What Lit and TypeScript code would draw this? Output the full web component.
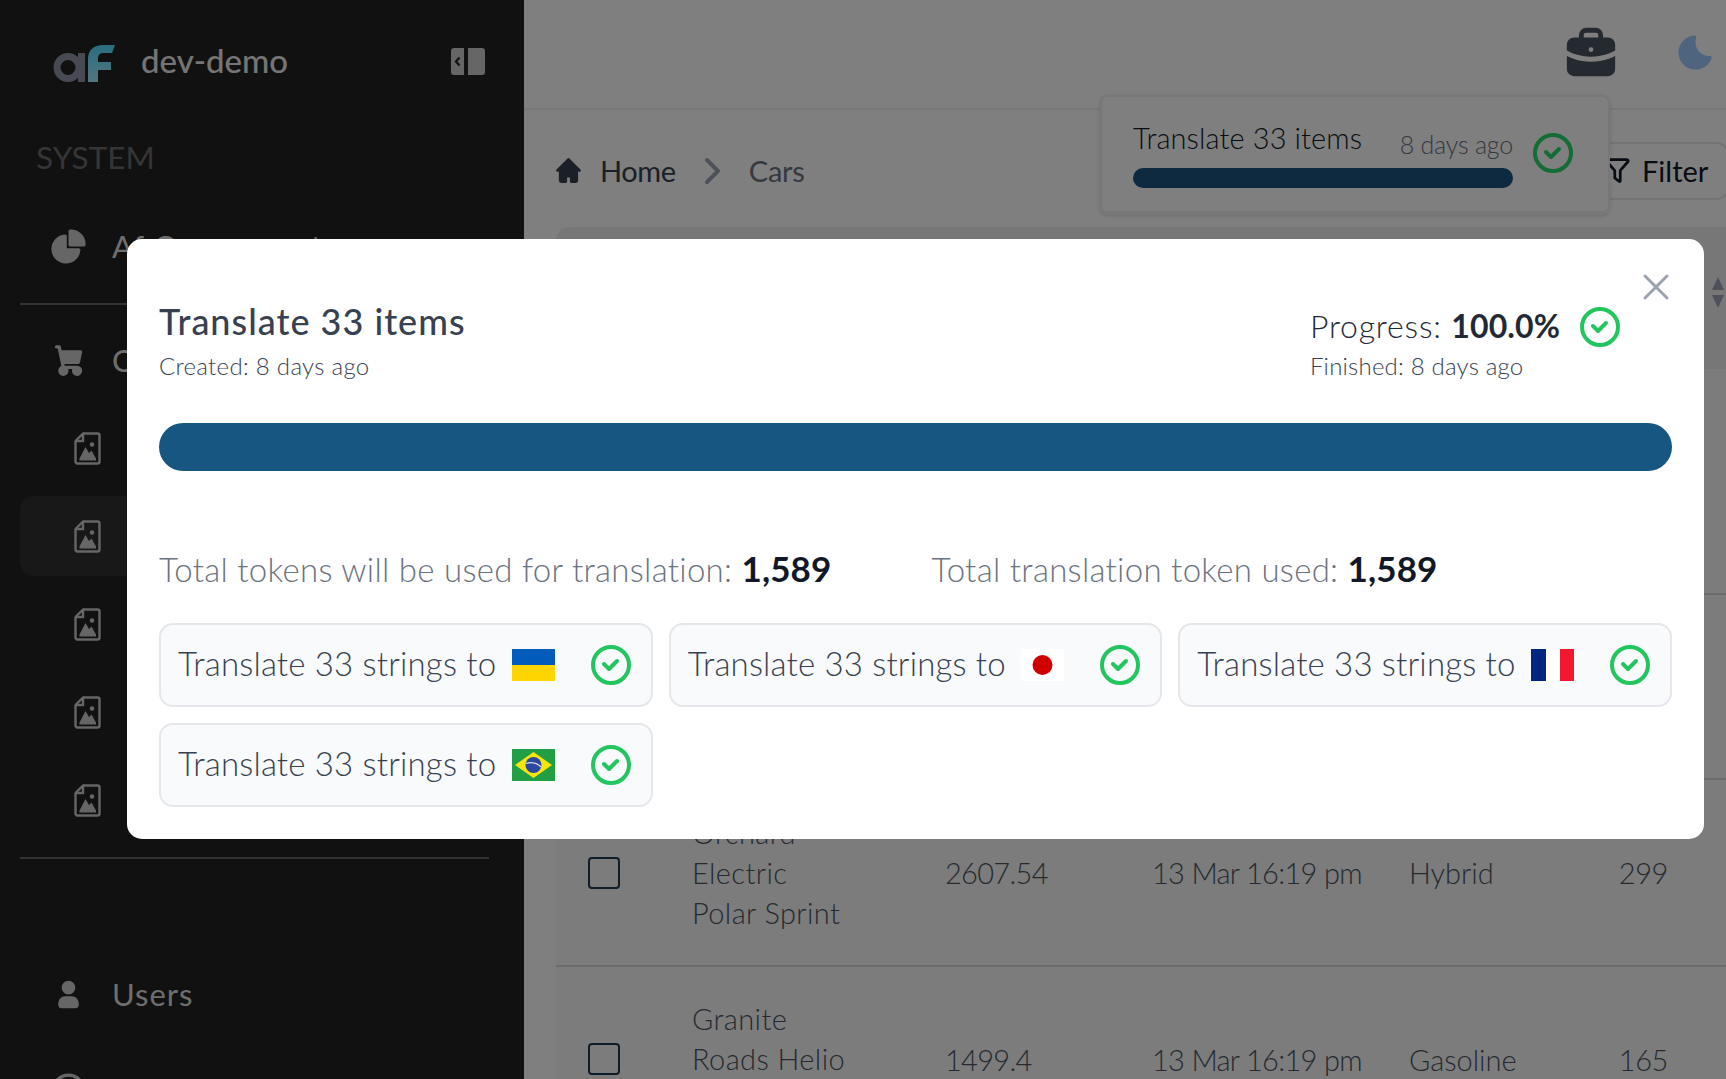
import { LitElement, html, css, svg } from 'lit'
import { customElement } from 'lit/decorators.js'

const fileIcon = html`<svg class="file-icon" viewBox="0 0 27 33">
  <path d="M9 1.500h14.500a2 2 0 0 1 2 2v26a2 2 0 0 1-2 2h-20a2 2 0 0 1-2-2V9Z" fill="none" stroke="currentColor" stroke-width="2.400" stroke-linejoin="round"/>
  <path d="M9 2v7H2" fill="none" stroke="currentColor" stroke-width="2.400"/>
  <circle cx="18" cy="12.500" r="2.300" fill="currentColor"/>
  <path d="M5.500 28.500v-2L11.500 15l3.500 6 2.500-2.500 4.500 8v2Z" fill="currentColor"/>
</svg>`

const checkIcon = html`<svg class="check" viewBox="0 0 24 24" fill="none">
  <path stroke="currentColor" stroke-linecap="round" stroke-linejoin="round" stroke-width="2" d="M8.500 11.500 11 14l4-4m6 2a9 9 0 1 1-18 0 9 9 0 0 1 18 0Z"/>
</svg>`

const flags = {
  ua: svg`<rect width="43" height="16" fill="#005bbb"/><rect y="16" width="43" height="16" fill="#ffd500"/>`,
  jp: svg`<rect width="43" height="32" fill="#fff"/><circle cx="21.500" cy="16" r="10" fill="#d00000"/>`,
  fr: svg`<rect width="15" height="32" fill="#00267f"/><rect x="15" width="14" height="32" fill="#fff"/><rect x="29" width="14" height="32" fill="#f31830"/>`,
  br: svg`<rect width="43" height="32" fill="#229e45"/><path d="M21.500 3 40 16 21.500 29 3 16Z" fill="#f8e509"/><circle cx="21.500" cy="16" r="8" fill="#2b49a3"/><path d="M13.800 14.500c5-1.500 11-.5 15.200 3.500" fill="none" stroke="#ddd" stroke-width="1.300"/>`,
}

const rows = [
  { h: 226, lines: [] as string[] },
  { h: 185, lines: [] as string[] },
  { h: 187, lines: ['Orchard', 'Electric', 'Polar Sprint'], price: '2607.54', date: '13 Mar 16:19 pm', type: 'Hybrid', power: '299' },
  { h: 186, lines: ['Granite', 'Roads Helio', '\u00a0'], price: '1499.4', date: '13 Mar 16:19 pm', type: 'Gasoline', power: '165' },
]

@customElement('app-root')
export class AppRoot extends LitElement {
  static styles = css`
  :host {
    display: block;
    height: 1079px;
    overflow: hidden;
    position: relative;
    font-family: Lato, 'Noto Sans', sans-serif;
    font-weight: 300;
    background: #fff;
  }
  .page {
    display: flex;
    height: 1079px;
  }
  .sidebar {
    width: 524px;
    flex: none;
    background: #222;
    color: #eaeaea;
    overflow: hidden;
  }
  .brand {
    height: 122px;
    display: flex;
    align-items: center;
    padding: 0 39px 0 53px;
  }
  .logo { width: 62px; height: 38px; margin: 6px 26px 0 0; flex: none; }
  .brand-name { font-size: 33px; font-weight: 500; flex: 1; margin-top: -2px; }
  .collapse { width: 34px; height: 27px; color: #ccc; }
  .system {
    padding-left: 36px;
    height: 72px;
    line-height: 70px;
    font-size: 31.500px;
    font-weight: 400;
    color: #6b6b6b;
  }
  .item {
    height: 88px;
    margin-left: 20px;
    width: 469px;
    display: flex;
    align-items: center;
    font-size: 31px;
    font-weight: 400;
    letter-spacing: 1px;
    color: #ddd;
    box-sizing: border-box;
    border-radius: 14px;
  }
  .item.first { margin-top: 8px; }
  .item.cart { margin-top: 11px; }
  .item.audit { margin-top: 8px; }
  .item.active { background: #303030; height: 80px; margin: 4px 0 4px 20px; }
  .item .slot { width: 92px; flex: none; display: flex; justify-content: center; color: #ccc; padding-left: 4px; box-sizing: border-box; }
  .item.sub .slot { padding-left: 54px; width: auto; }
  .ic { width: 41px; height: 41px; fill: currentColor; flex: none; }
  .file-icon { width: 27px; height: 33px; flex: none; }
  .rule { height: 2px; background: #666; margin: 13px 0 0 20px; width: 469px; }
  .users-gap { height: 91px; }
  .main {
    flex: 1;
    min-width: 0;
    overflow: hidden;
    background: #fff;
    color: #374151;
  }
  .topbar {
    height: 108px;
    border-bottom: 2px solid #eee;
    box-sizing: content-box;
    display: flex;
    align-items: center;
    justify-content: flex-end;
  }
  .bag { width: 58px; height: 58px; fill: #4b5563; margin: -4px 55px 0 0; }
  .moon { width: 41px; height: 41px; fill: #9cc8ff; margin: -4px 10px 0 0; }
  .toolbar {
    height: 117px;
    box-sizing: border-box;
    padding: 4px 0 0 28px;
    display: flex;
    align-items: center;
    font-size: 29px;
    font-weight: 400;
  }
  .crumb { display: flex; align-items: center; flex: 1; }
  .home-ic { width: 33px; height: 33px; fill: #374151; margin-right: 15px; }
  .crumb-home { color: #374151; letter-spacing: -.4px; }
  .chev { width: 18px; height: 30px; margin: 0 27px 0 28px; color: #9ca3af; }
  .crumb-cars { color: #6b7280; letter-spacing: -.2px; }
  .filter {
    height: 58px;
    width: 135px;
    margin-right: -4px;
    border: 2px solid #e5e7eb;
    border-radius: 14px;
    box-sizing: border-box;
    display: flex;
    align-items: center;
    gap: 8px;
    color: #111827;
  }
  .filter svg { width: 33px; height: 33px; flex: none; margin-left: 4px; }
  .table {
    margin-left: 32px;
    border-top-left-radius: 14px;
    overflow: hidden;
    background: #f8f8f8;
    font-size: 29px;
    letter-spacing: .4px;
    color: #4b5563;
  }
  .thead {
    height: 142px;
    background: #eeeeef;
    display: flex;
    justify-content: flex-end;
    align-items: flex-start;
  }
  .sort { width: 12px; height: 31px; margin: 50px 2px 0 0; color: #9ca3af; }
  .row {
    display: grid;
    grid-template-columns: 136px 253px 207px 257px 151px 108px;
    align-items: center;
    box-sizing: border-box;
    border-bottom: 2px solid #d8d8da;
  }
  .row .box {
    width: 32px;
    height: 32px;
    box-sizing: border-box;
    margin-left: 32px;
    border: 2px solid #1f3a52;
    border-radius: 4px;
    background: #f8f8f8;
  }
  .row .name div { line-height: 40px; }
  .row .num { letter-spacing: -.7px; }
  .row .type { letter-spacing: 0; }
  .row .power { text-align: right; letter-spacing: -.4px; }

  .popover {
    position: absolute;
    left: 1100px;
    top: 95px;
    width: 510px;
    height: 120px;
    box-sizing: border-box;
    background: #fff;
    border: 2px solid #f0f0f0;
    border-bottom-width: 4px;
    border-radius: 8px;
    box-shadow: 0 1px 4px rgba(0,0,0,.15);
    padding: 21px 0 0 31px;
    display: flex;
    color: #111827;
  }
  .popover-body { width: 380px; }
  .popover-head { display: flex; justify-content: space-between; align-items: flex-start; height: 50px; }
  .popover-title { font-size: 29px; line-height: 40px; letter-spacing: .1px; }
  .popover-time { font-size: 25px; color: #6b7280; letter-spacing: -.2px; line-height: 38px; margin-top: 7px; }
  .popover-bar { height: 20px; border-radius: 10px; background: #1a5580; }
  .popover .check { color: #2ad868; margin: 11px 0 0 16px; }

  .backdrop {
    position: absolute;
    inset: 0;
    background: rgba(0,0,0,.5);
  }
  .modal {
    position: absolute;
    left: 127px;
    top: 239px;
    width: 1577px;
    height: 600px;
    box-sizing: border-box;
    background: #fff;
    border-radius: 15px;
    padding: 60px 32px 32px;
    color: #374151;
  }
  .close {
    position: absolute;
    top: 34px;
    right: 34px;
    width: 28px;
    height: 28px;
    color: #9ca3af;
  }
  .modal-head { display: flex; justify-content: space-between; padding-right: 48px; height: 84px; }
  .modal-title { font-size: 36px; font-weight: 500; line-height: 44px; letter-spacing: 1px; color: #374151; }
  .modal-sub { font-size: 24px; line-height: 33px; color: #374151; letter-spacing: .3px; margin-top: 6px; }
  .prog-line { display: flex; align-items: center; gap: 16px; height: 44px; margin-top: 6px; }
  .prog-text { font-size: 32px; color: #1f2937; letter-spacing: .8px; margin-top: -3px; }
  .prog-text b { font-weight: 700; letter-spacing: .1px; }
  .prog-right .modal-sub { margin-top: 0; letter-spacing: .2px; }
  .check { width: 48px; height: 48px; flex: none; color: #22c55e; }
  .bar { height: 48px; margin-top: 40px; border-radius: 24px; background: #175680; }
  .tokens {
    display: flex;
    gap: 100px;
    height: 44px;
    line-height: 44px;
    margin-top: 75px;
    font-size: 33px;
    color: #6b7280;
    letter-spacing: .28px;
  }
  .tokens b { color: #111827; font-weight: 700; font-size: 35px; letter-spacing: .1px; }
  .cards {
    display: grid;
    grid-template-columns: repeat(3, 1fr);
    gap: 16px;
    margin-top: 33px;
  }
  .card {
    height: 84px;
    box-sizing: border-box;
    border: 2px solid #e5e7eb;
    border-radius: 14px;
    background: #f9fafb;
    display: flex;
    align-items: center;
    padding: 0 16px 0 17px;
    font-size: 33px;
    letter-spacing: .17px;
    color: #374151;
  }
  .card .label { flex: 1; white-space: nowrap; margin-top: -4px; }
  .flag { width: 43px; height: 32px; margin-right: 32px; flex: none; }
  `

  render() {
    return html`
    <div class="page">
      <aside class="sidebar">
        <div class="brand">
          <svg class="logo" viewBox="0 0 62 38">
            <defs>
              <linearGradient id="af" x1="0" y1="0" x2="0" y2="1">
                <stop offset="0" stop-color="#54dcff"/><stop offset="1" stop-color="#a6eaff"/>
              </linearGradient>
            </defs>
            <circle cx="15" cy="22.500" r="11" fill="none" stroke="#8f95a6" stroke-width="7"/>
            <rect x="25" y="8" width="7" height="29" fill="#8f95a6"/>
            <path d="M35 37V14C35 5 41 0 50 0h12l-3 8h-9c-3 0-5 2-5 6v3h13v8H45v12Z" fill="url(#af)"/>
          </svg>
          <span class="brand-name">dev-demo</span>
          <svg class="collapse" viewBox="0 0 34 27">
            <path d="M13 0H3a3 3 0 0 0-3 3v21a3 3 0 0 0 3 3h10Z" fill="currentColor"/>
            <path d="M17 0h14a3 3 0 0 1 3 3v21a3 3 0 0 1-3 3H17Z" fill="currentColor"/>
            <path d="M8.500 9.500 5 13.500l3.500 4" fill="none" stroke="#222" stroke-width="2.200"/>
          </svg>
        </div>
        <div class="system">SYSTEM</div>
        <div class="item first">
          <span class="slot"><svg class="ic" viewBox="0 0 24 24"><path d="M13.500 2c-.178 0-.356.013-.492.022l-.074.005a1 1 0 0 0-.934.998V11a1 1 0 0 0 1 1h7.975a1 1 0 0 0 .998-.934l.005-.074A7.040 7.040 0 0 0 22 10.500 8.500 8.500 0 0 0 13.500 2Z"/><path d="M11 6.025a1 1 0 0 0-1.065-.998 8.500 8.500 0 1 0 9.038 9.039A1 1 0 0 0 17.975 13H11V6.025Z"/></svg></span>
          Af Components
        </div>
        <div class="rule"></div>
        <div class="item cart">
          <span class="slot"><svg class="ic" viewBox="0 0 24 24"><path d="M4 4a1 1 0 0 1 1-1h1.500a1 1 0 0 1 .979.796L7.939 6H19a1 1 0 0 1 .979 1.204l-1.250 6a1 1 0 0 1-.979.796H9.605l.208 1H17a3 3 0 1 1-2.830 2h-2.340a3 3 0 1 1-4.009-1.760L5.686 5H5a1 1 0 0 1-1-1Z"/></svg></span>
          Cars
        </div>
        ${[0, 1, 2, 3, 4].map(i => html`
          <div class="item sub ${i === 1 ? 'active' : ''}"><span class="slot">${fileIcon}</span></div>
        `)}
        <div class="rule"></div>
        <div class="users-gap"></div>
        <div class="item"><span class="slot"><svg class="ic" viewBox="0 0 24 24"><path d="M12 4a4 4 0 1 0 0 8 4 4 0 0 0 0-8Zm-2 9a4 4 0 0 0-4 4v1a2 2 0 0 0 2 2h8a2 2 0 0 0 2-2v-1a4 4 0 0 0-4-4h-4Z"/></svg></span>Users</div>
        <div class="item audit"><span class="slot"><svg class="ic" viewBox="0 0 24 24"><path d="M12 3a9 9 0 1 0 0 18 9 9 0 0 0 0-18Z" fill="none" stroke="currentColor" stroke-width="2"/></svg></span>Audit logs</div>
      </aside>

      <main class="main">
        <div class="topbar">
          <svg class="bag" viewBox="0 0 24 24"><path fill-rule="evenodd" d="M10 2a3 3 0 0 0-3 3v1H5a3 3 0 0 0-3 3v2.382l1.447.723.005.003.027.013.12.056c.108.05.272.123.486.212.429.177 1.056.416 1.834.655C7.481 13.524 9.630 14 12 14c2.372 0 4.520-.475 6.080-.956.780-.240 1.406-.478 1.835-.655a14.028 14.028 0 0 0 .606-.268l.027-.013.005-.003L22 11.381V9a3 3 0 0 0-3-3h-2V5a3 3 0 0 0-3-3h-4Zm5 4V5a1 1 0 0 0-1-1h-4a1 1 0 0 0-1 1v1h6Zm6.447 7.894.553-.276V19a3 3 0 0 1-3 3H5a3 3 0 0 1-3-3v-5.382l.553.276.002.002.004.002.013.006.041.02.151.07c.13.06.318.144.557.242.478.198 1.163.46 2.010.72C7.019 15.476 9.370 16 12 16c2.628 0 4.980-.525 6.670-1.044a22.950 22.950 0 0 0 2.010-.72 15.994 15.994 0 0 0 .707-.312l.041-.02.013-.006.004-.002.001-.001-.431-.866.432.865ZM12 10a1 1 0 1 0 0 2h.01a1 1 0 1 0 0-2H12Z" clip-rule="evenodd"/></svg>
          <svg class="moon" viewBox="0 0 24 24"><path d="M11.675 2.015a.998.998 0 0 0-.403.011C6.090 2.400 2 6.722 2 12c0 5.523 4.477 10 10 10 4.356 0 8.058-2.784 9.430-6.667a1 1 0 0 0-1.020-1.330c-.08.006-.105.005-.127.005h-.001l-.028-.002A5.227 5.227 0 0 0 20 14a8 8 0 0 1-8-8c0-.952.121-1.752.404-2.558a.996.996 0 0 0 .096-.428V3a1 1 0 0 0-.825-.985Z"/></svg>
        </div>
        <div class="toolbar">
          <div class="crumb">
            <svg class="home-ic" viewBox="0 0 24 24"><path d="M11.293 3.293a1 1 0 0 1 1.414 0l6 6 2 2a1 1 0 0 1-1.414 1.414L19 12.414V19a2 2 0 0 1-2 2h-3a1 1 0 0 1-1-1v-3h-2v3a1 1 0 0 1-1 1H7a2 2 0 0 1-2-2v-6.586l-.293.293a1 1 0 0 1-1.414-1.414l2-2 6-6Z"/></svg>
            <span class="crumb-home">Home</span>
            <svg class="chev" viewBox="0 0 18 30"><path d="m3 4 11 11L3 26" fill="none" stroke="currentColor" stroke-width="4" stroke-linecap="round" stroke-linejoin="round"/></svg>
            <span class="crumb-cars">Cars</span>
          </div>
          <div class="filter">
            <svg viewBox="0 0 24 24" fill="none"><path stroke="currentColor" stroke-width="2" d="M18.796 4H5.204a1 1 0 0 0-.753 1.659l5.302 6.058a1 1 0 0 1 .247.659v4.874a.5.5 0 0 0 .2.4l3 2.250a.5.5 0 0 0 .8-.4v-7.124a1 1 0 0 1 .247-.659l5.302-6.059c.566-.646.106-1.658-.753-1.658Z"/></svg>
            Filter
          </div>
        </div>
        <div class="table">
          <div class="thead">
            <svg class="sort" viewBox="0 0 12 31"><path d="M6 0 12 13H0ZM6 31 0 18h12Z" fill="currentColor"/></svg>
          </div>
          ${rows.map(r => html`
            <div class="row" style="height:${r.h}px">
              ${r.lines.length ? html`
                <div class="box"></div>
                <div class="name">${r.lines.map(l => html`<div>${l}</div>`)}</div>
                <div class="num">${r.price}</div>
                <div class="num">${r.date}</div>
                <div class="type">${r.type}</div>
                <div class="power">${r.power}</div>
              ` : ''}
            </div>
          `)}
        </div>
      </main>
    </div>

    <div class="popover">
      <div class="popover-body">
        <div class="popover-head">
          <span class="popover-title">Translate 33 items</span>
          <span class="popover-time">8 days ago</span>
        </div>
        <div class="popover-bar"></div>
      </div>
      ${checkIcon}
    </div>

    <div class="backdrop"></div>

    <section class="modal">
      <svg class="close" viewBox="0 0 28 28"><path d="M3 3l22 22M25 3 3 25" fill="none" stroke="currentColor" stroke-width="3" stroke-linecap="round"/></svg>
      <div class="modal-head">
        <div>
          <div class="modal-title">Translate 33 items</div>
          <div class="modal-sub">Created: 8 days ago</div>
        </div>
        <div class="prog-right">
          <div class="prog-line">
            <span class="prog-text">Progress: <b>100.0%</b></span>
            ${checkIcon}
          </div>
          <div class="modal-sub">Finished: 8 days ago</div>
        </div>
      </div>
      <div class="bar"></div>
      <div class="tokens">
        <span>Total tokens will be used for translation: <b>1,589</b></span>
        <span>Total translation token used: <b>1,589</b></span>
      </div>
      <div class="cards">
        ${(['ua', 'jp', 'fr', 'br'] as const).map(f => html`
          <div class="card">
            <span class="label">Translate 33 strings to</span>
            <svg class="flag" viewBox="0 0 43 32">${flags[f]}</svg>
            ${checkIcon}
          </div>
        `)}
      </div>
    </section>
    `
  }
}
